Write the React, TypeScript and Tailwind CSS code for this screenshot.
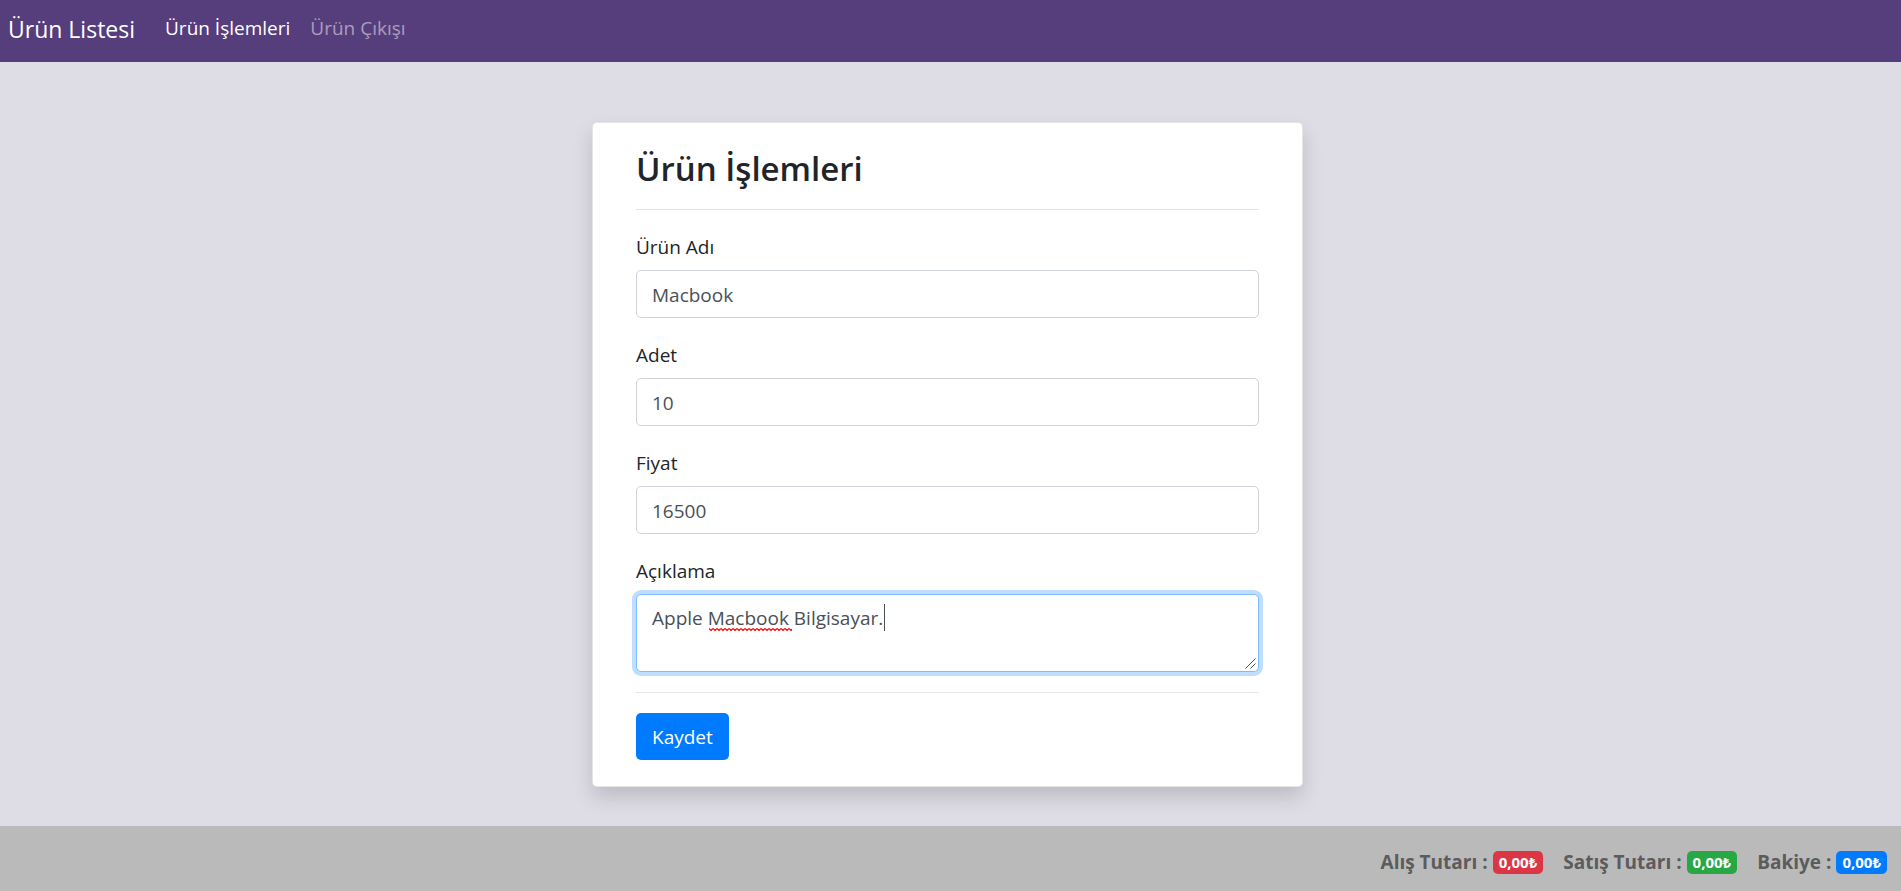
import { useState } from "react";
import type { ReactNode } from "react";

const fieldClass =
  "block w-full rounded-[5px] border bg-white px-[15px] text-[19px] leading-[30px] text-[#495057] outline-none";

function Field({ id, label, children }: { id: string; label: string; children: ReactNode }) {
  return (
    <div className="mb-5 flex flex-col gap-2">
      <label htmlFor={id} className="self-start pt-0.5 leading-[30px]">
        {label}
      </label>
      {children}
    </div>
  );
}

function TextField({ id, label, value }: { id: string; label: string; value: string }) {
  return (
    <Field id={id} label={label}>
      <input id={id} type="text" defaultValue={value} className={`${fieldClass} h-12 border-[#ced4da] pt-0.5`} />
    </Field>
  );
}

function Total({ label, color }: { label: string; color: string }) {
  return (
    <div className="flex items-center gap-[5px]">
      <span>{label} :</span>
      <span className={`flex h-[23px] items-center rounded-[5px] px-1.5 text-[15px] text-white ${color}`}>
        0,00₺
      </span>
    </div>
  );
}

function Squiggle() {
  return (
    <svg className="absolute left-[73px] top-[34px] h-[3px] w-[83px]" aria-hidden="true">
      <defs>
        <pattern id="wave" width="4" height="3" patternUnits="userSpaceOnUse">
          <path d="M0 .5 L2 2.5 L4 .5" fill="none" stroke="#f00" strokeWidth="1.2" />
        </pattern>
      </defs>
      <rect width="100%" height="3" fill="url(#wave)" />
    </svg>
  );
}

function ResizeGrip() {
  return (
    <svg
      className="pointer-events-none absolute bottom-[3px] right-[3px] h-[11px] w-[11px] text-[#495057]"
      viewBox="0 0 11 11"
      fill="none"
      stroke="currentColor"
      aria-hidden="true"
    >
      <path d="M.5 10.5 L10.5 .5 M5.5 10.5 L10.5 5.5" />
    </svg>
  );
}

export default function App() {
  const [description, setDescription] = useState("Apple Macbook Bilgisayar.");
  const pristine = description === "Apple Macbook Bilgisayar.";

  return (
    <div className="flex min-h-screen flex-col bg-[#dedce5] font-['Open_Sans','Noto_Sans',sans-serif] text-[19px] text-[#212529]">
      <nav className="flex h-[62px] items-start gap-[30px] bg-[#563d7c] px-2 text-white">
        <a href="#" className="pt-2.5 text-[23px] leading-[38px]">
          Ürün Listesi
        </a>
        <div className="flex gap-5 pt-[13px] leading-[30px]">
          <a href="#islemler">Ürün İşlemleri</a>
          <a href="#cikis" className="text-white/50">
            Ürün Çıkışı
          </a>
        </div>
      </nav>

      <main className="flex grow justify-center pb-[39px] pr-1.5 pt-[60px]">
        <form
          className="w-[711px] max-w-full self-start rounded-[5px] border border-black/10 bg-white px-[43px] pb-[26px] pt-[22px] shadow-[0_10px_20px_rgba(0,0,0,0.15)]"
          onSubmit={(e) => e.preventDefault()}
        >
          <h1 className="text-[33px] font-semibold leading-[48px]">Ürün İşlemleri</h1>
          <hr className="mb-5 mt-4 border-black/10" />
          <TextField id="name" label="Ürün Adı" value="Macbook" />
          <TextField id="count" label="Adet" value="10" />
          <TextField id="price" label="Fiyat" value="16500" />
          <Field id="description" label="Açıklama">
            <div className="relative">
              <textarea
                id="description"
                spellCheck={false}
                value={description}
                onChange={(e) => setDescription(e.target.value)}
                className={`${fieldClass} h-[78px] resize-none border-[#80bdff] py-2 shadow-[0_0_0_4px_#bfdeff]`}
              />
              {pristine && (
                <>
                  <Squiggle />
                  <span className="absolute left-[248px] top-2.5 h-[27px] w-px bg-[#495057]" />
                </>
              )}
              <ResizeGrip />
            </div>
          </Field>
          <hr className="mb-5 border-black/10" />
          <button type="submit" className="h-[47px] rounded-[5px] bg-[#007bff] px-4 pt-0.5 text-white">
            Kaydet
          </button>
        </form>
      </main>

      <footer className="flex h-[65px] items-center justify-end gap-5 bg-[#bababa] pr-3.5 pt-2 font-bold text-[#5c5c5c]">
        <Total label="Alış Tutarı" color="bg-[#dc3545]" />
        <Total label="Satış Tutarı" color="bg-[#28a745]" />
        <Total label="Bakiye" color="bg-[#007bff]" />
      </footer>
    </div>
  );
}
